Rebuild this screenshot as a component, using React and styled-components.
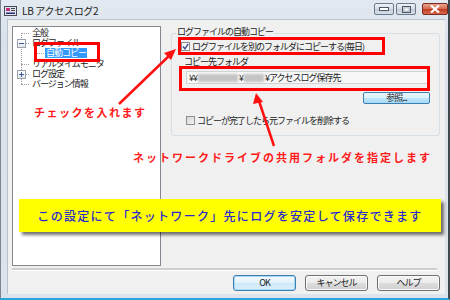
import React from "react";
import styled, { createGlobalStyle } from "styled-components";

const GlobalStyle = createGlobalStyle`
  html, body {
    margin: 0;
    padding: 0;
    background: #ffffff;
  }
  body {
    font-family: "Noto Sans CJK JP", "Liberation Sans", sans-serif;
  }
`;

const treeItems = [
  { label: "全般", level: 0 },
  { label: "ログファイル", level: 0, expander: "minus" },
  { label: "自動コピー", level: 1, selected: true },
  { label: "リアルタイムモニタ", level: 0 },
  { label: "ログ設定", level: 0, expander: "plus" },
  { label: "バージョン情報", level: 0 },
];

function App() {
  return (
    <>
      <GlobalStyle />
      <Window>
        <TitleBar>
          <AppIcon>
            <svg width="13" height="10" viewBox="0 0 13 10">
              <rect x="0.5" y="0.5" width="12" height="9" fill="#dfe6ee" stroke="#4a4a55" />
              <rect x="2" y="2" width="4" height="3" fill="#c0307a" />
              <rect x="7" y="2" width="4" height="1" fill="#444" />
              <rect x="7" y="4" width="4" height="1" fill="#444" />
              <rect x="2" y="6.5" width="9" height="1.5" fill="#2a2a7a" />
            </svg>
          </AppIcon>
          <Title>LB アクセスログ2</Title>
          <CaptionGroup>
            <CaptionButton>
              <svg width="10" height="5" viewBox="0 0 10 5">
                <rect x="0.5" y="0.5" width="9" height="3" fill="#fff" stroke="#4c5866" />
              </svg>
            </CaptionButton>
            <CaptionButton>
              <svg width="9" height="7" viewBox="0 0 9 7">
                <rect x="0.5" y="0.5" width="8" height="6" fill="none" stroke="#4c5866" />
                <rect x="2" y="2" width="5" height="3" fill="#fff" stroke="#8a96a4" strokeWidth="0.6" />
              </svg>
            </CaptionButton>
            <CloseButton>
              <svg width="10" height="8" viewBox="0 0 10 8">
                <path d="M1 0.5 L9 7.5 M9 0.5 L1 7.5" stroke="#ffffff" strokeWidth="2.2" />
              </svg>
            </CloseButton>
          </CaptionGroup>
        </TitleBar>

        <Client>
          <Main>
            <Tree>
              <TreeList>
                {treeItems.map((item, i) => (
                  <TreeRow key={i} $level={item.level}>
                    {item.expander && (
                      <Expander>
                        <svg width="5" height="5" viewBox="0 0 5 5">
                          <rect x="0" y="2" width="5" height="1" fill="#3d5a94" />
                          {item.expander === "plus" && (
                            <rect x="2" y="0" width="1" height="5" fill="#3d5a94" />
                          )}
                        </svg>
                      </Expander>
                    )}
                    <TreeLabel $selected={item.selected}>{item.label}</TreeLabel>
                  </TreeRow>
                ))}
              </TreeList>
            </Tree>

            <RightPane>
              <GroupBox>
                <GroupLegend>ログファイルの自動コピー</GroupLegend>
                <CheckRow>
                  <CheckBox $checked>
                    <svg width="7" height="7" viewBox="0 0 7 7">
                      <path d="M1 3.5 L3 5.8 L6.2 0.8" fill="none" stroke="#3b4f8c" strokeWidth="1.4" />
                    </svg>
                  </CheckBox>
                  <span>ログファイルを別のフォルダにコピーする(毎日)</span>
                </CheckRow>
                <FieldLabel>コピー先フォルダ</FieldLabel>
                <PathField>
                  ¥¥<Blur $w={40} />¥<Blur $w={20} />¥アクセスログ保存先
                </PathField>
                <BrowseButton>参照...</BrowseButton>
                <CheckRow $indent={5} $top={11}>
                  <CheckBox />
                  <span>コピーが完了したら元ファイルを削除する</span>
                </CheckRow>
              </GroupBox>
            </RightPane>
          </Main>

          <Separator />

          <ButtonRow>
            <DialogButton $default>OK</DialogButton>
            <DialogButton>キャンセル</DialogButton>
            <DialogButton>ヘルプ</DialogButton>
          </ButtonRow>
        </Client>

        <Marker $x={33} $y={42} $w={66} $h={20} />
        <Marker $x={177} $y={37} $w={207} $h={18} />
        <Marker $x={178} $y={66} $w={251} $h={25} />

        <Arrows width="450" height="300" viewBox="0 0 450 300">
          <line x1="118" y1="104" x2="170" y2="54" stroke="#ff1010" strokeWidth="2.5" />
          <polygon points="175,49 163,53 170,60" fill="#ff1010" />
          <line x1="273" y1="146" x2="258" y2="101" stroke="#ff1010" strokeWidth="2.5" />
          <polygon points="255,93 252,104 262,102" fill="#ff1010" />
        </Arrows>

        <Note $x={33} $y={105}>チェックを入れます</Note>
        <Note $x={132} $y={150} $spacing={2}>ネットワークドライブの共用フォルダを指定します</Note>

        <Banner>この設定にて「ネットワーク」先にログを安定して保存できます</Banner>
      </Window>
    </>
  );
}

const Window = styled.div`
  position: relative;
  width: 450px;
  height: 300px;
  box-sizing: border-box;
  display: flex;
  flex-direction: column;
  background: linear-gradient(#e3e9f0, #d9e1ea 40px, #dde3ea);
  border-left: 1px solid #7a8591;
  border-right: 2px solid #3e4650;
  border-bottom: 2px solid #2aa6dc;
  overflow: hidden;
`;

const TitleBar = styled.div`
  height: 19px;
  display: flex;
  align-items: center;
  padding-left: 3px;
  flex-shrink: 0;
`;

const AppIcon = styled.span`
  display: flex;
  width: 14px;
  margin-right: 4px;
  margin-top: 2px;
`;

const Title = styled.span`
  font-size: 10px;
  color: #1a1a1a;
  letter-spacing: -0.3px;
  margin-top: 1px;
`;

const CaptionGroup = styled.div`
  margin-left: auto;
  display: flex;
  gap: 2px;
  align-self: flex-start;
  margin-top: 3px;
`;

const CaptionButton = styled.span`
  width: 20px;
  height: 12px;
  box-sizing: border-box;
  border: 1px solid #6b7a8c;
  border-radius: 2px;
  background: linear-gradient(#eef2f6, #d3dbe4 50%, #c3ccd7 51%, #d6dee8);
  display: flex;
  align-items: center;
  justify-content: center;
`;

const CloseButton = styled(CaptionButton)`
  width: 26px;
  margin-left: 4px;
  border-color: #7a2a22;
  background: linear-gradient(#e9a48f, #d3664c 50%, #c0391f 51%, #d66a4c);
`;

const Client = styled.div`
  flex: 1;
  margin: 0 3px 4px 6px;
  background: #f0f0f0;
  border-top: 1px solid #b9c3cd;
  border-left: 1px solid #b9c3cd;
  padding: 6px 5px 0 4px;
  display: flex;
  flex-direction: column;
  font-size: 9px;
  letter-spacing: -1px;
  color: #1a1a1a;
`;

const Main = styled.div`
  display: flex;
  gap: 10px;
`;

const Tree = styled.div`
  width: 149px;
  height: 240px;
  box-sizing: border-box;
  border: 1px solid #828790;
  background: #ffffff;
  padding-top: 1px;
`;

const TreeList = styled.div`
  position: relative;
  &::before {
    content: "";
    position: absolute;
    left: 8px;
    top: 5px;
    bottom: 5px;
    border-left: 1px dotted #a0a0a0;
  }
`;

const TreeRow = styled.div`
  position: relative;
  height: 10.2px;
  display: flex;
  align-items: center;
  padding-left: ${(p) => (p.$level ? 32 : 18)}px;
  &::before {
    content: "";
    position: absolute;
    left: ${(p) => (p.$level ? 22 : 8)}px;
    top: 5px;
    width: ${(p) => (p.$level ? 9 : 8)}px;
    border-top: 1px dotted #a0a0a0;
  }
  &::after {
    content: "";
    position: absolute;
    display: ${(p) => (p.$level ? "block" : "none")};
    left: 22px;
    top: -1px;
    height: 6px;
    border-left: 1px dotted #a0a0a0;
  }
`;

const Expander = styled.span`
  position: absolute;
  left: 4px;
  top: 1px;
  width: 9px;
  height: 9px;
  box-sizing: border-box;
  border: 1px solid #9aa3ad;
  background: linear-gradient(#ffffff, #e2e6ea);
  display: flex;
  align-items: center;
  justify-content: center;
  z-index: 1;
`;

const TreeLabel = styled.span`
  line-height: 10px;
  height: 10px;
  padding: 0 1px;
  white-space: nowrap;
  background: ${(p) => (p.$selected ? "#3399ff" : "transparent")};
  color: ${(p) => (p.$selected ? "#ffffff" : "#1a1a1a")};
`;

const RightPane = styled.div`
  flex: 1;
  padding-top: 7px;
`;

const GroupBox = styled.div`
  position: relative;
  height: 103px;
  box-sizing: border-box;
  border: 1px solid #d5dfe5;
  border-radius: 3px;
  padding: 7px 9px 0 9px;
  display: flex;
  flex-direction: column;
`;

const GroupLegend = styled.span`
  position: absolute;
  left: 4px;
  top: -8px;
  padding: 0 1px;
  background: #f0f0f0;
  line-height: 11px;
`;

const CheckRow = styled.div`
  display: flex;
  align-items: center;
  gap: 2px;
  height: 10px;
  margin-left: ${(p) => p.$indent || 0}px;
  margin-top: ${(p) => p.$top || 0}px;
  white-space: nowrap;
`;

const CheckBox = styled.span`
  width: 9px;
  height: 9px;
  box-sizing: border-box;
  border: 1px solid #8f8f8f;
  background: ${(p) =>
    p.$checked
      ? "linear-gradient(135deg, #f4f4f4, #ffffff)"
      : "linear-gradient(135deg, #d6d6d6, #f2f2f2)"};
  display: flex;
  align-items: center;
  justify-content: center;
  flex-shrink: 0;
`;

const FieldLabel = styled.div`
  margin: 6px 0 0 3px;
  line-height: 10px;
`;

const PathField = styled.div`
  margin: 4px 0 0 5px;
  height: 13px;
  box-sizing: border-box;
  border: 1px solid #cfd2d6;
  background: #f7f7f7;
  padding-left: 2px;
  display: flex;
  align-items: center;
  white-space: nowrap;
`;

const Blur = styled.span`
  display: inline-block;
  width: ${(p) => p.$w}px;
  height: 8px;
  background: #c4c4c4;
  filter: blur(1.2px);
  margin: 0 1px;
`;

const BrowseButton = styled.span`
  align-self: flex-end;
  margin-top: 8px;
  width: 67px;
  height: 12px;
  box-sizing: border-box;
  border: 1px solid #3c7fb1;
  border-radius: 2px;
  background: linear-gradient(#eaf6fd, #d9f0fc 50%, #bee6fd 51%, #a7d9f5);
  display: flex;
  align-items: center;
  justify-content: center;
  line-height: 10px;
`;

const Separator = styled.div`
  margin: 2px 0 0 0;
  height: 2px;
  width: 425px;
  background: #cfcfcf;
  border-bottom: 1px solid #ffffff;
`;

const ButtonRow = styled.div`
  display: flex;
  justify-content: flex-end;
  gap: 9px;
  margin-top: 4px;
  padding-right: 0;
`;

const DialogButton = styled.span`
  width: 63px;
  height: 16px;
  box-sizing: border-box;
  border: 1px solid ${(p) => (p.$default ? "#3c7fb1" : "#707070")};
  border-radius: 3px;
  background: ${(p) =>
    p.$default
      ? "linear-gradient(#f2f9fd, #e3f2fb 50%, #cde8f8 51%, #dceffb)"
      : "linear-gradient(#f2f2f2, #ebebeb 50%, #dddddd 51%, #cfcfcf)"};
  box-shadow: ${(p) => (p.$default ? "inset 0 0 0 1px #a8d8f4" : "inset 0 0 0 1px #fbfbfb")};
  display: flex;
  align-items: center;
  justify-content: center;
  line-height: 10px;
`;

const Marker = styled.div`
  position: absolute;
  left: ${(p) => p.$x}px;
  top: ${(p) => p.$y}px;
  width: ${(p) => p.$w}px;
  height: ${(p) => p.$h}px;
  box-sizing: border-box;
  border: 3px solid #ff0000;
  pointer-events: none;
`;

const Arrows = styled.svg`
  position: absolute;
  left: 0;
  top: 0;
  pointer-events: none;
`;

const Note = styled.div`
  position: absolute;
  left: ${(p) => p.$x}px;
  top: ${(p) => p.$y}px;
  color: #ff1a1a;
  font-size: 11px;
  font-weight: 700;
  letter-spacing: ${(p) => p.$spacing || 1.5}px;
  line-height: 14px;
  white-space: nowrap;
`;

const Banner = styled.div`
  position: absolute;
  left: 18px;
  top: 199px;
  width: 422px;
  height: 33px;
  box-sizing: border-box;
  background: #ffff00;
  box-shadow: 3px 3px 3px rgba(0, 0, 0, 0.55);
  display: flex;
  align-items: center;
  justify-content: center;
  color: #2a2ad0;
  font-size: 12px;
  font-weight: 500;
  letter-spacing: 1.3px;
  white-space: nowrap;
`;

export default App;
